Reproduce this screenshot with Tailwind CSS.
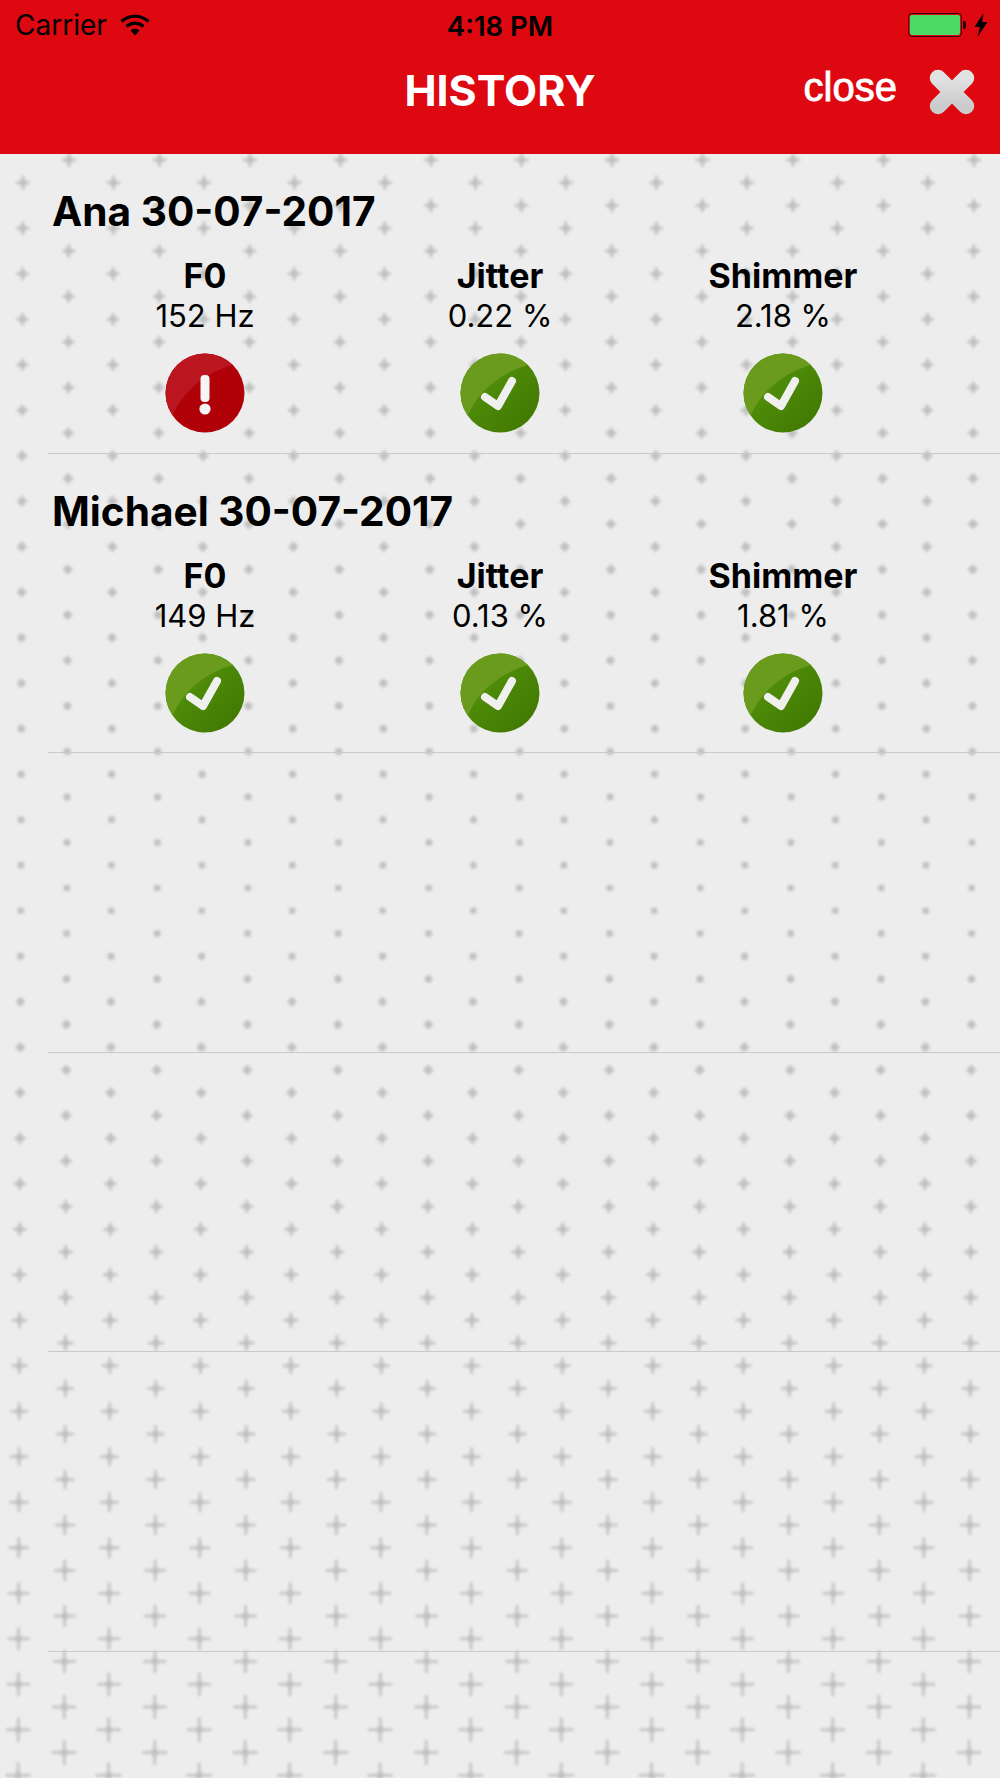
<!DOCTYPE html>
<html lang="en">
<head>
  <meta charset="UTF-8" />
  <meta name="viewport" content="width=device-width, initial-scale=1.0" />
  <title>History</title>
  <script src="https://cdn.jsdelivr.net/npm/@tailwindcss/browser@4"></script>
</head>
<body class="relative w-[1000px] h-[1778px] overflow-hidden bg-[#ededed] font-['Inter',sans-serif] text-black">

<!-- icon defs -->
<svg class="absolute w-0 h-0" aria-hidden="true">
  <defs>
    <clipPath id="disc"><circle cx="40" cy="40" r="39.5" /></clipPath>
    <linearGradient id="greenBase" x1="0" y1="0" x2="1" y2="1">
      <stop offset="0" stop-color="#579a0e" />
      <stop offset="1" stop-color="#3f7500" />
    </linearGradient>
    <linearGradient id="greyX" x1="0" y1="0" x2="0" y2="1">
      <stop offset="0" stop-color="#e2e2e2" />
      <stop offset="1" stop-color="#cbcbcb" />
    </linearGradient>
    <filter id="soft" x="0" y="0" width="100%" height="100%"><feGaussianBlur stdDeviation="1.600" /></filter>
    <symbol id="ok" viewBox="0 0 80 80">
      <circle cx="40" cy="40" r="39.5" fill="url(#greenBase)" />
      <path clip-path="url(#disc)" d="M0 0H66L68 12C46 18 20 34 8 62L0 66Z" fill="#6b9b1c" />
      <path d="M25 44L38 53L52 28" fill="none" stroke="#f0f0ee" stroke-width="8" stroke-linejoin="round" stroke-linecap="round" />
    </symbol>
    <symbol id="alert" viewBox="0 0 80 80">
      <circle cx="40" cy="40" r="39.5" fill="#b00008" />
      <path clip-path="url(#disc)" d="M0 0H66L68 12C46 18 20 34 8 62L0 66Z" fill="#bb1520" />
      <rect x="35.5" y="22" width="9" height="27" rx="4" fill="#f5f5f5" />
      <circle cx="40" cy="56" r="5.6" fill="#f5f5f5" />
    </symbol>
  </defs>
</svg>

<!-- tiled background -->
<svg id="tiles" class="absolute inset-0" width="1000" height="1778" aria-hidden="true"></svg>

<header class="relative bg-[#de0811] h-[154px]">
  <div class="flex items-center justify-between h-[50px] pl-[15px] pr-[12px]">
    <div class="flex items-center gap-[13px]">
      <span class="text-[28px] leading-[52px]">Carrier</span>
      <svg width="30" height="22" viewBox="0 0 30 22">
        <path d="M1.5 7.5C9 .5 21 .5 28.500 7.500" fill="none" stroke="#000" stroke-width="3.200" />
        <path d="M6.500 12.500C11.500 8 18.500 8 23.500 12.500" fill="none" stroke="#000" stroke-width="3.200" />
        <path d="M10.500 16.500C13 14.300 17 14.300 19.500 16.500L15 21.500Z" fill="#000" />
      </svg>
    </div>
    <div class="flex items-center gap-[6px]">
      <div class="w-[54px] h-[24px] rounded-[4px] border-[1.500px] border-[#3a0204] p-[1px]">
        <div class="w-full h-full rounded-[2px] bg-[#4cd964]"></div>
      </div>
      <div class="w-[3px] h-[8px] -ml-[5px] rounded-r-[2px] bg-[#1a0001]"></div>
      <svg width="14" height="24" viewBox="0 0 14 24" class="ml-[2px]"><path d="M9.500 0L0.500 14H6L3.500 24L13.500 9H8Z" fill="#000" /></svg>
    </div>
  </div>
  <div class="absolute top-[11px] left-0 w-full text-center text-[27.500px] leading-[30px] font-semibold">4:18 PM</div>
  <div class="relative flex items-center justify-center h-[78px] pt-[2px]">
    <h1 class="text-[43px] leading-[46px] font-bold text-white">HISTORY</h1>
    <div class="absolute right-[25px] top-[13px] flex items-center gap-[32px]">
      <span class="mb-[4px] font-['Liberation_Sans',sans-serif] text-[40px] leading-[44px] text-white [-webkit-text-stroke:0.9px_white]">close</span>
      <svg class="mt-[6px]" width="46" height="46" viewBox="0 0 46 46">
        <path d="M9 9L37 37M37 9L9 37" fill="none" stroke="url(#greyX)" stroke-width="16.500" stroke-linecap="round" />
      </svg>
    </div>
  </div>
</header>

<main class="relative pl-[48px]">
  <section class="h-[299.500px] border-b border-[#c9c9c9]">
    <h2 class="pl-[4px] pt-[33px] text-[40.600px] leading-[50px] font-bold">Ana 30-07-2017</h2>
    <div class="grid grid-cols-[314px_276px_290px] pt-[18px] text-center">
      <div class="flex flex-col items-center">
        <div class="text-[34px] leading-[41px] font-bold">F0</div>
        <div class="text-[31px] leading-[40px]">152 Hz</div>
        <svg class="mt-[17px]" width="80" height="80"><use href="#alert" /></svg>
      </div>
      <div class="flex flex-col items-center">
        <div class="text-[34px] leading-[41px] font-bold">Jitter</div>
        <div class="text-[31px] leading-[40px]">0.22 %</div>
        <svg class="mt-[17px]" width="80" height="80"><use href="#ok" /></svg>
      </div>
      <div class="flex flex-col items-center">
        <div class="text-[34px] leading-[41px] font-bold">Shimmer</div>
        <div class="text-[31px] leading-[40px]">2.18 %</div>
        <svg class="mt-[17px]" width="80" height="80"><use href="#ok" /></svg>
      </div>
    </div>
  </section>
  <section class="h-[299.500px] border-b border-[#c9c9c9]">
    <h2 class="pl-[4px] pt-[33px] text-[40.600px] leading-[50px] font-bold">Michael 30-07-2017</h2>
    <div class="grid grid-cols-[314px_276px_290px] pt-[18px] text-center">
      <div class="flex flex-col items-center">
        <div class="text-[34px] leading-[41px] font-bold">F0</div>
        <div class="text-[31px] leading-[40px]">149 Hz</div>
        <svg class="mt-[17px]" width="80" height="80"><use href="#ok" /></svg>
      </div>
      <div class="flex flex-col items-center">
        <div class="text-[34px] leading-[41px] font-bold">Jitter</div>
        <div class="text-[31px] leading-[40px]">0.13 %</div>
        <svg class="mt-[17px]" width="80" height="80"><use href="#ok" /></svg>
      </div>
      <div class="flex flex-col items-center">
        <div class="text-[34px] leading-[41px] font-bold">Shimmer</div>
        <div class="text-[31px] leading-[40px]">1.81 %</div>
        <svg class="mt-[17px]" width="80" height="80"><use href="#ok" /></svg>
      </div>
    </div>
  </section>
  <section class="h-[299.500px] border-b border-[#c9c9c9]"></section>
  <section class="h-[299.500px] border-b border-[#c9c9c9]"></section>
  <section class="h-[299.500px] border-b border-[#c9c9c9]"></section>
</main>

<script>
  // background plus marks: arms shrink to dots mid page and grow again lower down
  const tiles = document.getElementById('tiles');
  const NS = 'http://www.w3.org/2000/svg';
  const group = document.createElementNS(NS, 'g');
  group.setAttribute('filter', 'url(#soft)');
  group.setAttribute('fill', '#c0c0c0');
  let d = '';
  for (let i = 0; i < 72; i++) {
    const y = 160 + i * 22.75;
    const arm = y < 900 ? 3 + 4 * Math.abs(900 - y) / 740 : 3 + 8 * (y - 900) / 720;
    const drift = (y - 160) / 1320 * 4;
    const start = (i % 2 ? 23 : 69) - drift;
    for (let x = start; x < 1010; x += 90.5) {
      d += `M${x - arm} ${y - 1.3}h${arm * 2}v2.6h${-arm * 2}z`;
      d += `M${x - 1.3} ${y - arm}h2.6v${arm * 2}h-2.6z`;
      d += `M${x - 3} ${y - 3}h6v6h-6z`;
    }
  }
  const path = document.createElementNS(NS, 'path');
  path.setAttribute('d', d);
  group.appendChild(path);
  tiles.appendChild(group);
</script>

</body>
</html>
